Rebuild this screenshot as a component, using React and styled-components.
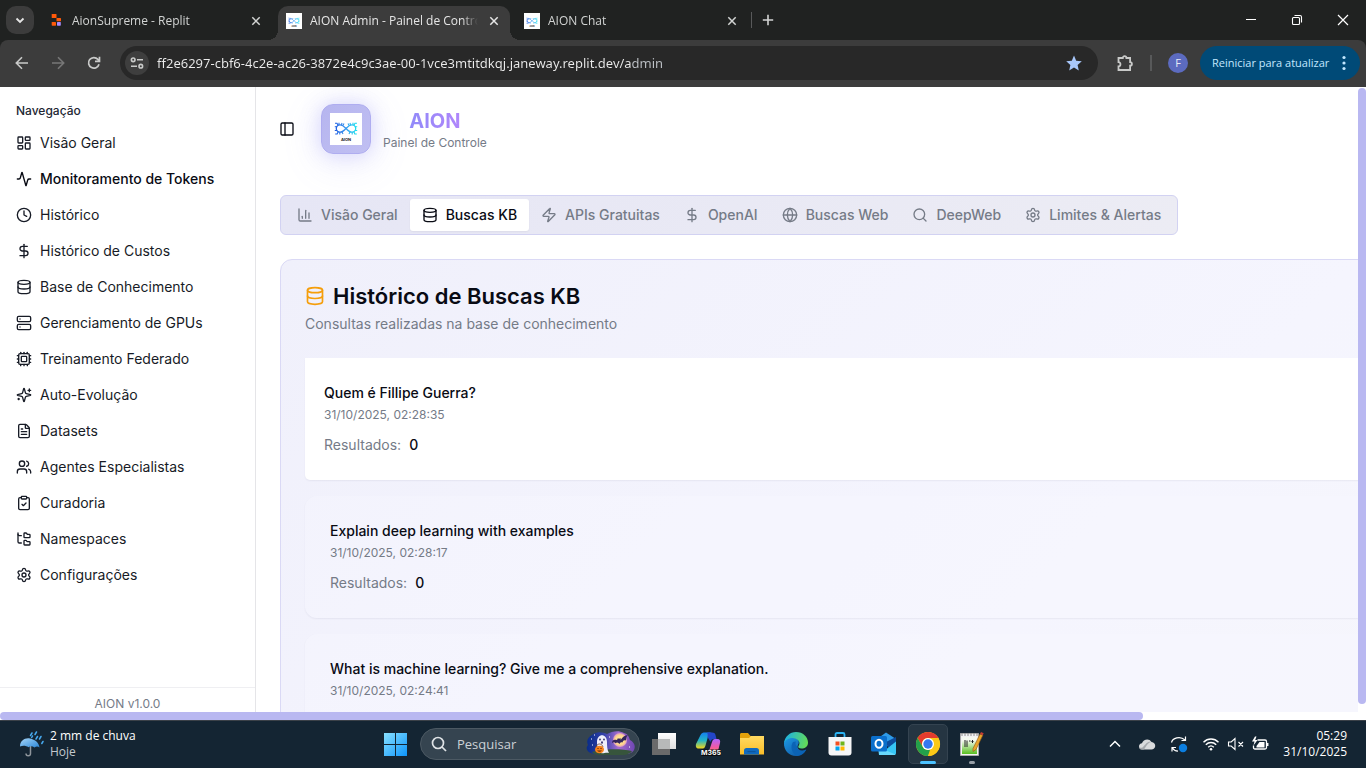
import React from "react";
import styled, { createGlobalStyle, css } from "styled-components";
import {
  Activity, ChartColumn, ClipboardCheck, Clock, Cpu, Database, DollarSign, FileText,
  FolderTree, Globe, LayoutDashboard, PanelLeft, Search, Server, Settings, Users, Zap,
} from "lucide-react";

const UI = `"Open Sans", "Noto Sans", sans-serif`;
const SITE = `Inter, "Liberation Sans", sans-serif`;

const GlobalStyle = createGlobalStyle`
  *, *::before, *::after { box-sizing: border-box; }
  body { margin: 0; background: #fff; }
  button, input { font: inherit; color: inherit; border: 0; background: none; padding: 0; margin: 0; outline: 0; }
  ul { list-style: none; margin: 0; padding: 0; }
  h1, h2, h3, p { margin: 0; }
  a { color: inherit; text-decoration: none; }
  svg { display: block; flex: none; }
`;

const Desktop = styled.div`
  display: flex;
  flex-direction: column;
  height: 100vh;
  overflow: hidden;
`;

/* ---------- browser chrome ---------- */

const Strip = styled.header`
  display: flex;
  height: 40px;
  flex: none;
  background: #202221;
  color: #d2d4d3;
  font: 12px/16px ${UI};
`;

const TabSearch = styled.button`
  display: grid;
  place-items: center;
  width: 28px;
  height: 28px;
  margin: 6px;
  border-radius: 10px;
  background: #3c3c3c;
  color: #e6e6e6;
`;

const TabRow = styled.div`
  display: flex;
  gap: 6px;
`;

const flare = css`
  content: "";
  position: absolute;
  bottom: 0;
  width: 10px;
  height: 10px;
`;

const BrowserTab = styled.div`
  position: relative;
  display: flex;
  align-items: center;
  gap: 8px;
  width: 232px;
  height: 34px;
  margin-top: 6px;
  padding: 0 8px 4px 8px;
  ${(p) => p.$active && css`
    background: #3c3c3c;
    color: #e6e6e6;
    border-radius: 10px 10px 0 0;
    &::before { ${flare} left: -10px; background: radial-gradient(circle at 0 0, transparent 10px, #3c3c3c 10px); }
    &::after { ${flare} right: -10px; background: radial-gradient(circle at 100% 0, transparent 10px, #3c3c3c 10px); }
  `}
`;

const TabLabel = styled.span`
  flex: 1;
  min-width: 0;
  overflow: hidden;
  white-space: nowrap;
  mask-image: linear-gradient(to right, #000 calc(100% - 16px), transparent);
`;

const IconButton = styled.button`
  display: grid;
  place-items: center;
  flex: none;
  width: ${(p) => p.$w || 16}px;
  height: ${(p) => p.$h || 16}px;
  color: ${(p) => p.$color || "inherit"};
`;

const NewTab = styled.div`
  display: flex;
  align-items: center;
  gap: 8px;
  margin-left: 3px;
`;

const Rule = styled.span`
  width: ${(p) => p.$w || 1}px;
  height: 16px;
  background: #58595a;
`;

const WindowButtons = styled.div`
  display: flex;
  margin-left: auto;
  color: #fff;
`;

const ToolbarFrame = styled.div`
  flex: none;
  background: #202221;
`;

const Toolbar = styled.div`
  display: flex;
  align-items: center;
  height: 47px;
  padding: 0 6px 1px 4px;
  border-radius: 8px 8px 0 0;
  background: #3c3c3c;
  color: #c9cac9;
  font: 12px/16px ${UI};
`;

const AddressBar = styled.div`
  display: flex;
  align-items: center;
  flex: 1;
  height: 34px;
  margin: 0 13px 0 8px;
  padding: 0 16px 0 5px;
  gap: 8px;
  border-radius: 17px;
  background: #282828;
`;

const SiteInfo = styled.button`
  display: grid;
  place-items: center;
  width: 24px;
  height: 24px;
  border-radius: 50%;
  background: #3e3e3e;
`;

const AddressInput = styled.input`
  flex: 1;
  min-width: 0;
  font-family: "Noto Sans", sans-serif;
  font-size: 13px;
  line-height: 20px;
  color: transparent;
  background: linear-gradient(to right, #ececec 474px, #bdc1c6 474px);
  background-clip: text;
`;

const Profile = styled.button`
  display: grid;
  place-items: center;
  width: 20px;
  height: 20px;
  margin: 0 12px 0 16px;
  border-radius: 50%;
  background: #5c6bc0;
  color: #e8eaf6;
  font-size: 11px;
`;

const Extensions = styled(IconButton)`
  margin-right: 11px;
`;

const Restart = styled.button`
  display: flex;
  align-items: center;
  justify-content: space-between;
  width: 160px;
  height: 34px;
  padding: 0 14px 0 12px;
  border-radius: 17px;
  background: #004a77;
  color: #c2e7ff;
  font-size: 11px;
  white-space: nowrap;
`;

/* ---------- site ---------- */

const Viewport = styled.div`
  display: grid;
  grid-template-columns: minmax(0, 1fr) 8px;
  grid-template-rows: minmax(0, 1fr) 8px;
  flex: 1;
  min-height: 0;
  background: #fff;
  font: 14px/20px ${SITE};
  color: #090b14;
`;

const Site = styled.div`
  display: flex;
  min-width: 0;
  overflow: hidden;
`;

const Track = styled.div`
  padding: ${(p) => (p.$vertical ? "1px 0 8px" : "0")};
`;

const Thumb = styled.div`
  width: ${(p) => (p.$vertical ? "100%" : "84.2%")};
  height: 100%;
  border-radius: 4px;
  background: #b9b8f1;
`;

const Sidebar = styled.aside`
  display: flex;
  flex-direction: column;
  width: 256px;
  flex: none;
  border-right: 1px solid #e5e5e8;
`;

const NavGroup = styled.nav`
  flex: 1;
  min-height: 0;
  padding: 8px;
`;

const NavTitle = styled.h2`
  padding: 0 8px;
  font-size: 12px;
  font-weight: 500;
  line-height: 32px;
  color: #232733;
`;

const NavList = styled.ul`
  display: flex;
  flex-direction: column;
  gap: 4px;
`;

const NavLink = styled.a`
  display: flex;
  align-items: center;
  gap: 8px;
  height: 32px;
  padding: 0 8px;
  font-weight: ${(p) => (p.$active ? 500 : 400)};
  color: ${(p) => (p.$active ? "#090b14" : "#171b26")};
`;

const SidebarFooter = styled.footer`
  padding: 8px 8px 0;
  border-top: 1px solid #efeff2;
  text-align: center;
  font-size: 12px;
  line-height: 16px;
  color: #757b87;
`;

const Main = styled.main`
  flex: 1;
  min-width: 0;
  overflow: hidden;
`;

const PageHeader = styled.header`
  display: flex;
  align-items: center;
  gap: 20px;
  height: 84px;
  padding: 0 17px;
`;

const Brand = styled.div`
  display: flex;
  align-items: center;
  gap: 12px;
  text-align: center;
`;

const LogoTile = styled.div`
  display: grid;
  place-items: center;
  width: 50px;
  height: 50px;
  border: 1px solid #afadf0;
  border-radius: 12px;
  background: linear-gradient(135deg, #b6b5ef, #c0bff2);
  box-shadow: 0 0 20px rgba(139, 135, 245, 0.3), 0 8px 40px rgba(139, 135, 245, 0.16);
`;

const BrandName = styled.h1`
  font-size: 20px;
  line-height: 28px;
  font-weight: 700;
  color: transparent;
  background: linear-gradient(90deg, #818cf8, #c084fc);
  background-clip: text;
`;

const BrandNote = styled.p`
  font-size: 12px;
  line-height: 16px;
  color: #757b87;
`;

const Content = styled.div`
  padding: 24px;
`;

const TabList = styled.div`
  display: inline-flex;
  align-items: center;
  height: 40px;
  padding: 0 4px;
  border: 1px solid #d2d2f2;
  border-radius: 6px;
  background: linear-gradient(135deg, #e6e6f5, #ececf4);
  white-space: nowrap;
`;

const SiteTab = styled.button`
  display: flex;
  align-items: center;
  gap: 8px;
  height: 32px;
  padding: 0 12px;
  border-radius: 3px;
  font-weight: 500;
  color: #757b87;
  ${(p) => p.$active && css`
    background: #fff;
    color: #090b14;
    box-shadow: 0 1px 2px rgba(0, 0, 0, 0.05);
  `}
`;

const Card = styled.section`
  width: 122%;
  margin-top: 24px;
  padding: 24px;
  border: 1px solid #dad9f5;
  border-radius: 12px;
  background: linear-gradient(135deg, #f0f0fb, #f5f5fe 60%, #f6f6fb);
`;

const CardTitle = styled.h2`
  display: flex;
  align-items: center;
  gap: 8px;
  font-size: 22px;
  line-height: 24px;
  font-weight: 600;
`;

const CardNote = styled.p`
  margin-top: 6px;
  color: #757b87;
`;

const Results = styled.ul`
  display: flex;
  flex-direction: column;
  gap: 16px;
  margin-top: 24px;
`;

const Result = styled.li`
  min-height: 122px;
  padding: 24px;
  border: 1px solid transparent;
  border-radius: 12px;
  background: rgba(248, 248, 255, 0.4);
  box-shadow: 0 1px 2px rgba(20, 20, 60, 0.06);
  ${(p) => p.$active && css`
    padding-left: 18px;
    border-radius: 0 0 0 5px;
    background: #fff;
  `}
`;

const Query = styled.h3`
  font-size: 14px;
  font-weight: 500;
  line-height: 20px;
`;

const Stamp = styled.p`
  margin-top: 4px;
  font-size: 12px;
  line-height: 16px;
  color: #757b87;
`;

const Count = styled.p`
  display: flex;
  gap: 8px;
  margin-top: 12px;
  color: #757b87;
  b { font-weight: 500; color: #090b14; }
`;

/* ---------- taskbar ---------- */

const Taskbar = styled.footer`
  display: grid;
  grid-template-columns: minmax(0, 1fr) auto minmax(0, 1fr);
  align-items: center;
  flex: none;
  height: 48px;
  padding: 0 0 1px 2px;
  border-top: 1px solid #3b4148;
  background: #142533;
  color: #fff;
  font: 12px/16px ${UI};
`;

const Weather = styled.button`
  display: flex;
  align-items: center;
  gap: 6px;
  padding-left: 16px;
  text-align: left;
`;

const Faint = styled.span`
  display: block;
  color: #c3c8cd;
`;

const Dock = styled.div`
  display: flex;
  align-items: center;
`;

const DockButton = styled.button`
  position: relative;
  display: grid;
  place-items: center;
  width: 44px;
  height: 44px;
  &::before {
    content: "";
    display: ${(p) => (p.$active ? "block" : "none")};
    position: absolute;
    inset: 2px;
    border: 1px solid #344350;
    border-radius: 5px;
    background: #253542;
  }
  &::after {
    content: "";
    display: ${(p) => (p.$active || p.$open ? "block" : "none")};
    position: absolute;
    bottom: 2px;
    width: ${(p) => (p.$active ? 16 : 6)}px;
    height: 3px;
    border-radius: 2px;
    background: ${(p) => (p.$active ? "#4cc2ff" : "#98a0a8")};
  }
  svg { position: relative; }
`;

const SearchBox = styled.label`
  display: flex;
  align-items: center;
  gap: 10px;
  width: 220px;
  height: 32px;
  margin: 0 2px;
  padding: 0 3px 0 10px;
  border: 1px solid #4c5963;
  border-radius: 16px;
  background: #354450;
  color: #dfe3e6;
  font-size: 13px;
  input { flex: 1; min-width: 0; }
  input::placeholder { color: #ccd2d6; opacity: 1; }
`;

const Tray = styled.div`
  display: flex;
  align-items: center;
  justify-content: flex-end;
  padding-right: 19px;
`;

const ClockText = styled.time`
  width: 72px;
  text-align: right;
  white-space: nowrap;
`;

/* ---------- drawings ---------- */

const Line = ({ size = 16, box = 16, w = 1.5, children, ...rest }) => (
  <svg width={size} height={size} viewBox={`0 0 ${box} ${box}`} fill="none" stroke="currentColor" strokeWidth={w} {...rest}>{children}</svg>
);

const Cross = () => <Line w={1.5}><path d="M4.300 4.300l7.400 7.400M11.700 4.300l-7.400 7.400" /></Line>;

const ReplitIcon = () => (
  <svg width="16" height="16" viewBox="0 0 16 16">
    <rect x="3.700" y="1" width="4.800" height="4" rx=".6" fill="#ff5a0a" />
    <rect x="8.500" y="5" width="4.500" height="3.300" rx=".6" fill="#ff5a0a" />
    <rect x="3.700" y="9" width="4.300" height="3.700" rx=".6" fill="#ff5a0a" />
    <rect x="9" y="9" width="3.800" height="3.700" rx=".6" fill="#a58bff" />
  </svg>
);

const AionLogo = ({ size, id }) => (
  <svg width={size} height={size} viewBox="0 0 32 32">
    <defs>
      <linearGradient id={id} x1="5" x2="27" y1="0" y2="0" gradientUnits="userSpaceOnUse">
        <stop stopColor="#1d5be0" /><stop offset=".5" stopColor="#3a9af0" /><stop offset="1" stopColor="#1ae4ef" />
      </linearGradient>
    </defs>
    <path fill="#fff" d="M0 0h32v32H0z" />
    <g fill="none" stroke={`url(#${id})`}>
      <path strokeWidth="1.300" d="M16 15.500C13.500 12.800 12 11.800 10 11.800a3.700 3.700 0 0 0 0 7.400c2 0 3.500-1 6-3.700s4-3.700 6-3.700a3.700 3.700 0 0 1 0 7.400c-2 0-3.500-1-6-3.700z" />
      <path strokeWidth="1.100" d="M5 10.200h2l1 2M9 9.800v2M12 10l-.5 2M4.800 13.800h2.400M4.800 17.500h2.400M5.200 21h2l1-2.500M9.800 21.500v-2.500M13 21l-1.200-2.500M14 10.500l-1 2M27 10.200h-2l-1 2M23 9.800v2M20 10l.5 2M27.200 13.800h-2.400M27.200 17.500h-2.400M26.800 21h-2l-1-2.500M22.200 21.500v-2.500M19 21l1.200-2.500M18 10.500l1 2" />
    </g>
    <text x="16" y="27.800" textAnchor="middle" fontSize="4" fontWeight="700" fontFamily="Inter, sans-serif" fill="#222">AION</text>
  </svg>
);

const SparklesIcon = () => (
  <svg width="16" height="16" viewBox="0 0 24 24" fill="none" stroke="currentColor" strokeWidth="2" strokeLinecap="round" strokeLinejoin="round">
    <path d="M9.937 15.5A2 2 0 0 0 8.5 14.063l-6.135-1.582a.5.5 0 0 1 0-.962L8.5 9.936A2 2 0 0 0 9.937 8.5l1.582-6.135a.5.5 0 0 1 .963 0L14.063 8.5A2 2 0 0 0 15.5 9.937l6.135 1.581a.5.5 0 0 1 0 .964L15.5 14.063a2 2 0 0 0-1.437 1.437l-1.582 6.135a.5.5 0 0 1-.963 0z" />
    <path d="M20 3v4M22 5h-4M4 17v2M5 18H3" />
  </svg>
);

const Umbrella = () => (
  <svg width="26" height="26" viewBox="0 0 26 26">
    <defs><linearGradient id="umb" x2="1" y2="1"><stop stopColor="#a5d5f8" /><stop offset="1" stopColor="#2b86d6" /></linearGradient></defs>
    <path d="M12.500 13v9.500c0 3-4.500 3-4.500 0" fill="none" stroke="#8e959b" strokeWidth="1.500" />
    <path d="M2 15.500C2 9.500 7 6.500 12 7.500s9 4 9.500 9c-1.500-1.300-3.500-1.300-5 0-2-1.500-4.500-1.500-6-.2-2.500-1.700-5.500-2-8.500-.8z" fill="url(#umb)" />
    <path d="M14 2l-1.500 2.500M18.500 1L17 3.500M23 5.500L21.500 8M19.500 5.500L18 8M25 10.500L23.800 12.500M14.500 5l-.8 1.500" stroke="#47a9ee" strokeWidth="1.500" strokeLinecap="round" />
  </svg>
);

const WindowsLogo = () => (
  <svg width="24" height="24" viewBox="0 0 24 24">
    <defs><linearGradient id="win" x2="24" y2="24" gradientUnits="userSpaceOnUse"><stop stopColor="#8be2ff" /><stop offset="1" stopColor="#0a93fb" /></linearGradient></defs>
    <path fill="url(#win)" d="M0 1h11v11H0zM12 1h11v11H12zM0 13h11v11H0zM12 13h11v11H12z" />
  </svg>
);

const Halloween = () => (
  <svg width="50" height="26" viewBox="0 0 50 26">
    <defs>
      <linearGradient id="night" x2="50" y2="0" gradientUnits="userSpaceOnUse"><stop stopColor="#072b86" /><stop offset=".35" stopColor="#3240a8" /><stop offset=".65" stopColor="#a56ed0" /><stop offset="1" stopColor="#6b43b0" /></linearGradient>
      <radialGradient id="moon"><stop stopColor="#fff3a0" /><stop offset=".7" stopColor="#ffd48c" /><stop offset="1" stopColor="#d999c5" /></radialGradient>
    </defs>
    <path d="M6 4c4-4 11-3 15-1 5-3 12-4 17-1 4 1 5 4 6 7 4 2 6 6 4 10-3 5-10 4-15 4H8c-7-1-9-6-6-9-2-4 0-8 4-10z" fill="url(#night)" />
    <path d="M6 21c8-3 28-4 40-1-3 5-12 4-20 4S9 25 6 21z" fill="#37553c" />
    <circle cx="34" cy="9" r="7" fill="url(#moon)" />
    <path d="M26 12c0-3 2-4 5-3l1-2 1 1 1.300-1.300.5 2C36.500 6 38.500 4.500 42 4c-2 1.500-1.500 4-2 5.500-2-.6-3 0-3.500 2-1.500-.7-2.200 0-3 1.500-1.200-1.700-2.500-2-4-.8-.7-1-2-1.200-3.500-.2z" fill="#33265c" />
    <path d="M10 20c2-2 1-6 1-9 0-9 10-9 10 0 0 3 0 8 2 11-3-1-6 1-8 0-2 0-3-1-5-2z" fill="#f0effb" />
    <circle cx="14" cy="8.500" r=".9" fill="#33306a" /><circle cx="18" cy="8.500" r=".9" fill="#33306a" /><ellipse cx="16" cy="11.500" rx=".9" ry="1.300" fill="#33306a" />
    <path d="M10 16c1-4 6-4 7 0" fill="none" stroke="#6e411b" strokeWidth=".8" />
    <ellipse cx="13.500" cy="18.500" rx="4.500" ry="3.800" fill="#f7831b" />
    <path d="M11 18l1-1.200 1 1.200zM14 18l1-1.200 1 1.200zM11 19.500c1.500 1.600 3.500 1.600 5 0z" fill="#6b2d08" />
    <path d="M5 8h1M8 4h1M23 6h1M43 16h1M6 14h1" stroke="#fff" />
  </svg>
);

const TaskView = () => (
  <svg width="26" height="24" viewBox="0 0 26 24">
    <defs><linearGradient id="tv" x2="0" y2="1"><stop stopColor="#fff" /><stop offset="1" stopColor="#dfdfdf" /></linearGradient></defs>
    <path fill="#6a6a6a" d="M1 7h18v16H1z" /><path fill="url(#tv)" d="M7 1h18v16H7z" /><path fill="#b7b9b9" d="M7 7h12v10H7z" />
  </svg>
);

const Copilot = () => (
  <svg width="26" height="26" viewBox="0 0 26 26">
    <defs>
      <linearGradient id="cpa" x2="0" y2="1"><stop stopColor="#147ff0" /><stop offset=".5" stopColor="#22b5c5" /><stop offset="1" stopColor="#f4d819" /></linearGradient>
      <linearGradient id="cpb" x2="0" y2="1"><stop stopColor="#b164ff" /><stop offset=".6" stopColor="#f25aa0" /><stop offset="1" stopColor="#ff875f" /></linearGradient>
    </defs>
    <path fill="url(#cpa)" d="M5.500 4C6.500 1.700 8 1.500 10 1.500h6.500c-2 .5-3 2-3.500 4l-2.500 9c-.7 2.500-1.500 3-4 3H4c-3 0-3.500-2-3-4.500z" />
    <path fill="url(#cpb)" d="M20 8h2.500c2.500 0 3 2 2.500 4l-1.500 6c-.7 3-2 4-4.500 4h-8c2 0 3-1.500 3.500-3.500L17 11c.6-2 1.500-3 3-3z" />
    <path fill="#2446c8" d="M12 1.500h5c2 0 3 .7 3.500 2.500L21.500 8H19c-2 0-3 1-3.500 3l-3-5c.4-3 0-3.500-.5-4.500z" />
    <path fill="#0a0c10" d="M6.500 18.500h19V25h-19z" />
    <text x="16" y="24.400" textAnchor="middle" fontSize="7" fontWeight="700" textRendering="geometricPrecision" fontFamily="Inter, sans-serif" fill="#fff">M365</text>
  </svg>
);

const Folder = () => (
  <svg width="26" height="24" viewBox="0 0 26 24">
    <defs><linearGradient id="fol" x2="0" y2="1"><stop stopColor="#ffda62" /><stop offset="1" stopColor="#f9bd28" /></linearGradient></defs>
    <path fill="#e2a10b" d="M1 2.500C1 1.600 1.600 1 2.500 1H9l2.500 3H24v8H1z" />
    <path fill="url(#fol)" d="M1 6h9l2-2h13v18.500H1z" />
    <path fill="#0f6abf" d="M5 22.500v-4c0-1.600 1-2.500 2.500-2.500h10c1.600 0 2.500 1 2.500 2.500v4z" /><path fill="#0b559c" d="M8.500 19h8v1.200h-8z" />
  </svg>
);

const Edge = () => (
  <svg width="26" height="26" viewBox="0 0 26 26">
    <defs>
      <linearGradient id="edg" y1=".3" y2=".5"><stop stopColor="#1bb0e8" /><stop offset="1" stopColor="#63dc57" /></linearGradient>
      <linearGradient id="edb" x2="1" y2="1"><stop stopColor="#1d9be6" /><stop offset="1" stopColor="#0d4f9d" /></linearGradient>
    </defs>
    <path fill="url(#edb)" d="M1 12C3 5 10 5 13.500 7.500 16 9 16.500 12 15 14c-2 4 3 7.500 8.300 4.500C21 23 17 25 13 25 6 25 .5 19 1 12z" />
    <path fill="#0b63b5" d="M10 11c-3 4-1.500 12 4.500 14 4-.4 7-3 8.800-6.500-4 2.500-9.800 1.500-9.300-3C12.500 14.500 12 12 13 10.500z" />
    <path fill="url(#edg)" d="M1 12.500C1.500 5.500 7 1 13 1c7 0 12 5 12 10.500 0 4-3 6-6.500 6-2.500 0-4-1-3-2.500C18.500 11 14 7 9.500 7 5 7 2 9.500 1 12.500z" />
  </svg>
);

const Store = () => (
  <svg width="26" height="26" viewBox="0 0 26 26">
    <path d="M8.500 7V3.500c0-1 .6-1.500 1.500-1.500h6c1 0 1.500.6 1.500 1.500V7" fill="none" stroke="#2bb3f3" strokeWidth="1.800" />
    <path fill="#f5f6f7" d="M1.500 6h23v15.500a3 3 0 0 1-3 3h-17a3 3 0 0 1-3-3z" />
    <path fill="#f25022" d="M8.500 10.500h4v4h-4z" /><path fill="#6fb51b" d="M13.500 10.500h4v4h-4z" /><path fill="#00a4ef" d="M8.500 15.500h4v4h-4z" /><path fill="#ffb900" d="M13.500 15.500h4v4h-4z" />
  </svg>
);

const Outlook = () => (
  <svg width="26" height="26" viewBox="0 0 26 26">
    <path fill="#2e9be8" d="M6 8l9-6.500L25 8v7H6z" /><path fill="#0d4c9c" d="M15 11l10-5v6l-8 5z" />
    <path fill="#37c5f4" d="M25 10.500v11.500c0 1.500-1 2-2 2H8L25 10.500z" /><path fill="#68d8fb" d="M8 24l-1-8 17.500 7.500c-.5.4-1 .5-1.500.5z" />
    <rect y="5" width="16" height="15.500" rx="1.500" fill="#0b6fcb" />
    <ellipse cx="8" cy="12.800" rx="3.500" ry="4" fill="none" stroke="#fff" strokeWidth="2" />
  </svg>
);

const Chrome = () => (
  <svg width="26" height="26" viewBox="0 0 26 26">
    <circle cx="13" cy="13" r="12" fill="#fbc816" />
    <path fill="#e33b2e" d="M2.600 7A12 12 0 0 1 23.400 7H13a6 6 0 0 0-5.200 9z" />
    <path fill="#23a14b" d="M2.600 7l5.200 9a6 6 0 0 0 7.300 2.600L13 25A12 12 0 0 1 2.600 7z" />
    <path fill="#fbc816" d="M13 25l5.200-9A6 6 0 0 0 18.200 10L23.400 7A12 12 0 0 1 13 25z" />
    <circle cx="13" cy="13" r="6" fill="#fff" /><circle cx="13" cy="13" r="4.700" fill="#3478f0" />
  </svg>
);

const Notepad = () => (
  <svg width="26" height="26" viewBox="0 0 26 26">
    <defs><linearGradient id="npp" x2="0" y2="1"><stop offset=".2" stopColor="#f6faf0" /><stop offset="1" stopColor="#58bf20" /></linearGradient></defs>
    <path fill="#f3f3f3" stroke="#aaa" d="M1.500 2.500h18v22h-18z" /><path fill="url(#npp)" d="M3 6h15v17H3z" />
    <path d="M3 2v3M6 2v3M9 2v3M12 2v3M15 2v3M18 2v3" stroke="#8c8c8c" />
    <path d="M6 16V9M8 16V9.500M10 10h1.500M13.500 9v3M12.500 10.500h2" stroke="#222" fill="none" />
    <path d="M14 17.500L21 3l2.800 1.300L17 18.500l-3 2z" fill="#eaa52c" stroke="#8d5a16" strokeWidth=".6" /><path d="M21 3l1-2 2.700 1.300-1 2z" fill="#c43d35" />
  </svg>
);

const CloudIcon = () => (
  <svg width="18" height="18" viewBox="0 0 18 18">
    <path fill="#d9dbdd" d="M4 14.500C1.500 14.500.8 12.500 1 11c.2-1.700 1.500-2.600 3-2.800C5 4.500 11 2.500 13.500 7c2.500.3 4 2 3.700 4.300-.2 2-1.700 3.200-3.700 3.200z" />
    <path fill="#a5a9ad" d="M13.500 7c-4 .5-5 4-7.500 7.500H4C1.500 14.500.8 12.500 1 11c.3 2 2.500 2.500 4 1C8 9 9.500 6 13.500 7z" />
  </svg>
);

const SyncIcon = () => (
  <svg width="18" height="18" viewBox="0 0 18 18" fill="none" stroke="#fff" strokeWidth="1.200">
    <path d="M1.500 7.500C2.500 3 10 .500 15 5M15.500 1.500V5.500H11.500M2 16.500v-4h4M2.500 13c1 1.800 3 3 5.500 3.200" />
    <circle cx="13" cy="13" r="4.200" fill="#0b7ee0" stroke="none" />
  </svg>
);

const WifiIcon = () => (
  <Line size={18} box={18} w={1.4}>
    <path d="M1.500 7.200c4.200-4.200 10.800-4.200 15 0M3.800 9.700c3-3 7.400-3 10.400 0M6.200 12.200c1.700-1.600 3.900-1.600 5.600 0" />
    <circle cx="9" cy="14.300" r="1.300" fill="currentColor" stroke="none" />
  </Line>
);

const MuteIcon = () => (
  <Line size={18} box={18} w={1.1}>
    <path d="M1.500 7h2.700L8 3.500v11L4.200 11H1.500zM11.500 7l4.500 4.500M16 7l-4.500 4.500" />
  </Line>
);

const BatteryIcon = () => (
  <Line size={18} box={18} w={1.3}>
    <path d="M6.500 5H14c1 0 1.500.5 1.500 1.500v6c0 1-.5 1.500-1.500 1.500H4c-1 0-1.500-.5-1.500-1.500V10.500M16.800 8v3" />
    <path d="M5.500 12.500V11L8.500 7h5v5.500z" fill="currentColor" stroke="none" />
    <path d="M4 1.500L1 6.500h2.500L2.500 10.500 6.500 5H4.200L5.500 1.500z" fill="currentColor" stroke="none" />
  </Line>
);

/* ---------- data ---------- */

const nav = [
  [LayoutDashboard, "Visão Geral"], [Activity, "Monitoramento de Tokens"], [Clock, "Histórico"],
  [DollarSign, "Histórico de Custos"], [Database, "Base de Conhecimento"], [Server, "Gerenciamento de GPUs"],
  [Cpu, "Treinamento Federado"], [SparklesIcon, "Auto-Evolução"], [FileText, "Datasets"],
  [Users, "Agentes Especialistas"], [ClipboardCheck, "Curadoria"], [FolderTree, "Namespaces"],
  [Settings, "Configurações"],
];

const siteTabs = [
  [ChartColumn, "Visão Geral"], [Database, "Buscas KB"], [Zap, "APIs Gratuitas"], [DollarSign, "OpenAI"],
  [Globe, "Buscas Web"], [Search, "DeepWeb"], [Settings, "Limites & Alertas"],
];

const queries = [
  { text: "Quem é Fillipe Guerra?", time: "31/10/2025, 02:28:35", count: 0 },
  { text: "Explain deep learning with examples", time: "31/10/2025, 02:28:17", count: 0 },
  { text: "What is machine learning? Give me a comprehensive explanation.", time: "31/10/2025, 02:24:41" },
];

const dock = [
  ["Visão de tarefas", TaskView], ["Microsoft 365 Copilot", Copilot], ["Explorador de Arquivos", Folder],
  ["Microsoft Edge", Edge], ["Microsoft Store", Store], ["Outlook", Outlook], ["Google Chrome", Chrome],
  ["Notepad++", Notepad],
];

function BrowserChrome() {
  const tabs = [
    ["AionSupreme - Replit", <ReplitIcon />],
    ["AION Admin - Painel de Controle", <AionLogo size={16} id="fav1" />],
    ["AION Chat", <AionLogo size={16} id="fav2" />],
  ];
  return (
    <>
      <Strip>
        <TabSearch aria-label="Pesquisar guias"><Line w={1.8}><path d="M4.500 6.500L8 10l3.500-3.500" /></Line></TabSearch>
        <TabRow>
          {tabs.map(([label, icon], i) => (
            <BrowserTab key={label} $active={i === 1}>
              {icon}
              <TabLabel>{label}</TabLabel>
              <IconButton aria-label="Fechar guia"><Cross /></IconButton>
            </BrowserTab>
          ))}
        </TabRow>
        <NewTab>
          <Rule />
          <IconButton aria-label="Nova guia"><Line w={1.6}><path d="M8 2.800v10.400M2.800 8h10.400" /></Line></IconButton>
        </NewTab>
        <WindowButtons>
          <IconButton $w={46} $h={40} aria-label="Minimizar"><Line w={1}><path d="M3 7.500h10" /></Line></IconButton>
          <IconButton $w={46} $h={40} aria-label="Restaurar"><Line w={1.1}><rect x="3.500" y="5.500" width="7" height="7" rx="1" /><path d="M5.500 3.500h5.500c1 0 1.500.5 1.500 1.500v5.500" /></Line></IconButton>
          <IconButton $w={46} $h={40} aria-label="Fechar"><Line w={1.2}><path d="M3 3l10 10M13 3L3 13" /></Line></IconButton>
        </WindowButtons>
      </Strip>
      <ToolbarFrame>
        <Toolbar>
          <IconButton $w={36} $h={34} aria-label="Voltar"><Line w={1.6}><path d="M14 8H2.500M8 2.300L2.300 8 8 13.700" /></Line></IconButton>
          <IconButton $w={36} $h={34} $color="#777" aria-label="Avançar"><Line w={1.6}><path d="M2 8h11.500M8 2.300L13.700 8 8 13.700" /></Line></IconButton>
          <IconButton $w={36} $h={34} aria-label="Recarregar"><Line w={1.7}><path d="M13 9.200A5.300 5.300 0 1 1 11.900 4.400L13.500 6M13.500 1.800v4.500H9" /></Line></IconButton>
          <AddressBar>
            <SiteInfo aria-label="Informações do site"><Line w={1.6}><circle cx="4.200" cy="4.800" r="1.800" /><path d="M8 4.800h6M2 11.200h6" /><circle cx="11.800" cy="11.200" r="1.800" /></Line></SiteInfo>
            <AddressInput aria-label="Endereço" defaultValue="ff2e6297-cbf6-4c2e-ac26-3872e4c9c3ae-00-1vce3mtitdkqj.janeway.replit.dev/admin" />
            <IconButton aria-label="Favorito" $color="#a8c7fa"><svg width="16" height="16" viewBox="0 0 16 16"><path fill="currentColor" d="M8 .500l2.200 5.200 5.600.5-4.200 3.700 1.200 5.500L8 12.500l-4.800 2.900 1.200-5.500L.2 6.200l5.600-.5z" /></svg></IconButton>
          </AddressBar>
          <Extensions $w={28} $h={28} aria-label="Extensões"><Line size={18} box={18} w={1.8}><path d="M2.500 4h4.300c0-2.400 3.600-2.400 3.600 0h3.700v4.200c2.400 0 2.400 3.400 0 3.400V16H2.500v-3.700c2.600 0 2.600-4.200 0-4.200z" /></Line></Extensions>
          <Rule $w={2} />
          <Profile>F</Profile>
          <Restart>Reiniciar para atualizar
            <svg width="4" height="16" viewBox="0 0 4 16" fill="currentColor"><circle cx="2" cy="2.500" r="1.600" /><circle cx="2" cy="8" r="1.600" /><circle cx="2" cy="13.500" r="1.600" /></svg>
          </Restart>
        </Toolbar>
      </ToolbarFrame>
    </>
  );
}

export default function App() {
  return (
    <Desktop>
      <GlobalStyle />
      <BrowserChrome />
      <Viewport>
        <Site>
          <Sidebar>
            <NavGroup aria-label="Navegação">
              <NavTitle>Navegação</NavTitle>
              <NavList>
                {nav.map(([Icon, label], i) => (
                  <li key={label}><NavLink href="#" $active={i === 1}><Icon size={16} />{label}</NavLink></li>
                ))}
              </NavList>
            </NavGroup>
            <SidebarFooter>AION v1.0.0</SidebarFooter>
          </Sidebar>
          <Main>
            <PageHeader>
              <IconButton $w={28} $h={28} aria-label="Alternar barra lateral"><PanelLeft size={16} /></IconButton>
              <Brand>
                <LogoTile><AionLogo size={32} id="brand" /></LogoTile>
                <div>
                  <BrandName>AION</BrandName>
                  <BrandNote>Painel de Controle</BrandNote>
                </div>
              </Brand>
            </PageHeader>
            <Content>
              <TabList role="tablist">
                {siteTabs.map(([Icon, label], i) => (
                  <SiteTab key={label} role="tab" aria-selected={i === 1} $active={i === 1}><Icon size={16} />{label}</SiteTab>
                ))}
              </TabList>
              <Card>
                <CardTitle><Database size={20} color="#f59e0b" />Histórico de Buscas KB</CardTitle>
                <CardNote>Consultas realizadas na base de conhecimento</CardNote>
                <Results>
                  {queries.map(({ text, time, count }, i) => (
                    <Result key={time} $active={i === 0}>
                      <Query>{text}</Query>
                      <Stamp>{time}</Stamp>
                      {count !== undefined && <Count>Resultados: <b>{count}</b></Count>}
                    </Result>
                  ))}
                </Results>
              </Card>
            </Content>
          </Main>
        </Site>
        <Track $vertical><Thumb $vertical /></Track>
        <Track><Thumb /></Track>
      </Viewport>
      <Taskbar>
        <Weather>
          <Umbrella />
          <span>2 mm de chuva<Faint>Hoje</Faint></span>
        </Weather>
        <Dock>
          <DockButton aria-label="Iniciar"><WindowsLogo /></DockButton>
          <SearchBox>
            <Line w={1.7}><circle cx="7" cy="7" r="5.500" /><path d="M11 11l4 4" /></Line>
            <input aria-label="Pesquisar" placeholder="Pesquisar" />
            <Halloween />
          </SearchBox>
          {dock.map(([label, Icon]) => (
            <DockButton key={label} aria-label={label} $active={label === "Google Chrome"} $open={label === "Notepad++"}><Icon /></DockButton>
          ))}
        </Dock>
        <Tray>
          <IconButton $w={32} $h={32} aria-label="Ícones ocultos"><Line w={1.5}><path d="M3 10.500l5-5 5 5" /></Line></IconButton>
          <IconButton $w={32} $h={32} aria-label="OneDrive"><CloudIcon /></IconButton>
          <IconButton $w={32} $h={32} aria-label="Atualização"><SyncIcon /></IconButton>
          <IconButton $w={32} $h={32} aria-label="Rede"><WifiIcon /></IconButton>
          <IconButton $w={18} $h={32} aria-label="Som"><MuteIcon /></IconButton>
          <IconButton $w={30} $h={32} aria-label="Bateria"><BatteryIcon /></IconButton>
          <ClockText>05:29<br />31/10/2025</ClockText>
        </Tray>
      </Taskbar>
    </Desktop>
  );
}
